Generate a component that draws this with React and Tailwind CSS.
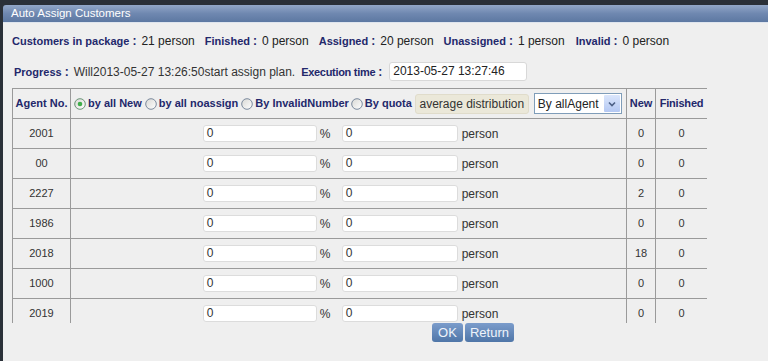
import React from "react";

const F = { fontFamily: '"Liberation Sans", Arial, "Noto Sans CJK SC", sans-serif' };

function Label({ children, className = "" }) {
  return (
    <span className={"font-bold text-[11px] text-[#23286b] whitespace-nowrap " + className}>
      {children}
      <span className="inline-block w-[12px] pl-[3px] text-[12px] font-bold">:</span>
    </span>
  );
}

function Radio({ checked }) {
  return (
    <svg width="12" height="12" viewBox="0 0 12 12" className="shrink-0">
      <defs>
        <linearGradient id={checked ? "rg1" : "rg0"} x1="0" y1="0" x2="1" y2="1">
          <stop offset="0" stopColor="#d8d8d4" />
          <stop offset="1" stopColor="#ffffff" />
        </linearGradient>
      </defs>
      <circle cx="6" cy="6" r="5.3" fill={`url(#${checked ? "rg1" : "rg0"})`} stroke={checked ? "#5c8a6a" : "#6e7f94"} strokeWidth="0.9" />
      {checked && <circle cx="6" cy="6" r="2.3" fill="#3fae4a" />}
    </svg>
  );
}

const rows = [
  ["2001", "0"],
  ["00", "0"],
  ["2227", "2"],
  ["1986", "0"],
  ["2018", "18"],
  ["1000", "0"],
  ["2019", "0"],
];

function Input({ w, value }) {
  return (
    <div
      className="h-[17px] bg-white rounded-[3px] border border-[#dcdcdc] text-[12px] text-[#333] leading-[15px] pl-[3px]"
      style={{ width: w }}
    >
      {value}
    </div>
  );
}

export default function App() {
  return (
    <div style={F} className="w-[768px] h-[361px] overflow-hidden bg-[#2a3038] flex flex-col pt-[5px] pl-[3px]">
      <div className="h-[17px] shrink-0 rounded-tl-[3px] bg-gradient-to-b from-[#92a7c8] via-[#6f88b0] to-[#5d78a2] text-white text-[11.5px] leading-[17px] pl-[8px] whitespace-nowrap">
        Auto Assign Customers
      </div>
      <div className="flex-1 bg-[#efefef] border-t border-[#dfe5ee] pl-[9px] flex flex-col">
        <div className="mt-[10px] h-[15px] flex items-center text-[12px] text-[#222] whitespace-nowrap">
          <Label>Customers in package</Label>
          <span className="mr-[10px]">21 person</span>
          <Label>Finished</Label>
          <span className="mr-[10px]">0 person</span>
          <Label>Assigned</Label>
          <span className="mr-[10px]">20 person</span>
          <Label>Unassigned</Label>
          <span className="mr-[11px]">1 person</span>
          <Label>Invalid</Label>
          <span>0 person</span>
        </div>
        <div className="mt-[14px] h-[19px] flex items-center text-[12px] text-[#333] whitespace-nowrap pl-[2px]">
          <Label>Progress</Label>
          <span className="mr-[6px]">Will2013-05-27 13:26:50start assign plan.</span>
          <Label className="tracking-[-0.3px]">Execution time</Label>
          <div className="ml-[2px] w-[138px] h-[19px] bg-white rounded-[3px] border border-[#d8d8d8] text-[12px] text-[#222] leading-[17px] pl-[3px]">
            2013-05-27 13:27:46
          </div>
        </div>
        <div className="mt-[7px] h-[235px] overflow-hidden w-[695px] shrink-0">
          <table className="border-collapse table-fixed w-[695px] text-[12px] text-[#333]">
            <colgroup>
              <col className="w-[58px]" />
              <col className="w-[556px]" />
              <col className="w-[29px]" />
              <col className="w-[52px]" />
            </colgroup>
            <thead>
              <tr className="h-[30px]">
                <th className="border border-[#9a9a9a] font-bold text-[11px] text-[#23286b] p-0 whitespace-nowrap">Agent No.</th>
                <th className="border border-[#9a9a9a] p-0 font-bold text-[11px] text-[#23286b]">
                  <div className="flex items-center whitespace-nowrap pl-[3px]">
                    <Radio checked />
                    <span className="ml-[2px] mr-[3px]">by all New</span>
                    <Radio />
                    <span className="ml-[2px] mr-[3px]">by all noassign</span>
                    <Radio />
                    <span className="ml-[2px] mr-[2px]">By InvalidNumber</span>
                    <Radio />
                    <span className="ml-[2px] mr-[3px]">By quota</span>
                    <div className="h-[20px] w-[114px] rounded-[3px] bg-[#ebe8d9] border border-[#e0dccb] text-[12px] font-normal text-[#333] flex items-center justify-center">
                      average distribution
                    </div>
                    <div className="ml-[5px] h-[21px] w-[88px] bg-white border border-[#7f9db9] flex items-center font-normal text-[12px] text-[#222]">
                      <span className="flex-1 text-left pl-[3px]">By allAgent</span>
                      <div className="w-[16px] h-[17px] mr-[1px] bg-gradient-to-b from-[#dbe6fb] to-[#b4c8f3] flex items-center justify-center rounded-[1px]">
                        <svg width="8" height="6" viewBox="0 0 8 6">
                          <path d="M1 1.5 L4 4.5 L7 1.5" fill="none" stroke="#4d6185" strokeWidth="1.6" />
                        </svg>
                      </div>
                    </div>
                  </div>
                </th>
                <th className="border border-[#9a9a9a] font-bold text-[11px] text-[#23286b] p-0">New</th>
                <th className="border border-[#9a9a9a] font-bold text-[11px] text-[#23286b] p-0 tracking-[-0.2px]">Finished</th>
              </tr>
            </thead>
            <tbody>
              {rows.map(([id, n]) => (
                <tr key={id} className="h-[30px]">
                  <td className="border border-[#9a9a9a] text-center p-0 text-[11px]">{id}</td>
                  <td className="border border-[#9a9a9a] p-0">
                    <div className="flex items-center justify-center pl-[4px]">
                      <Input w={114} value="0" />
                      <span className="ml-[3px] w-[10px]">%</span>
                      <span className="ml-[12px]"><Input w={116} value="0" /></span>
                      <span className="ml-[4px]">person</span>
                    </div>
                  </td>
                  <td className="border border-[#9a9a9a] text-center p-0 text-[11px]">{n}</td>
                  <td className="border border-[#9a9a9a] text-center p-0 text-[11px]">0</td>
                </tr>
              ))}
            </tbody>
          </table>
        </div>
        <div className="flex h-[19px] pl-[420px] gap-[2px] shrink-0">
          <div className="w-[31px] h-[19px] rounded-[3px] bg-gradient-to-b from-[#7b9ccb] to-[#4f76a8] text-[#eef3fa] text-[13px] leading-[19px] text-center">OK</div>
          <div className="w-[49px] h-[19px] rounded-[3px] bg-gradient-to-b from-[#7b9ccb] to-[#4f76a8] text-[#eef3fa] text-[13px] leading-[19px] text-center">Return</div>
        </div>
      </div>
    </div>
  );
}
